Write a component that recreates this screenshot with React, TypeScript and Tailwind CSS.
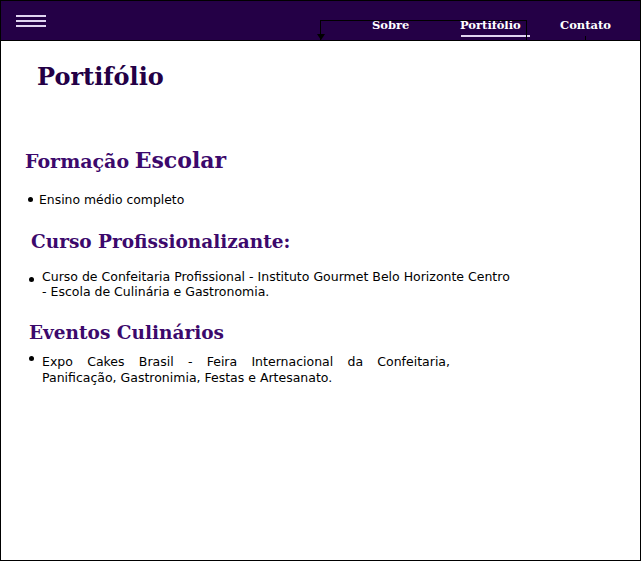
const serif = { fontFamily: '"DejaVu Serif", "Liberation Serif", serif' };
const sans = { fontFamily: '"DejaVu Sans", Verdana, sans-serif' };

function Bullet({ className }: { className: string }) {
  return <span className={`absolute left-0 h-[5px] w-[5px] rounded-full bg-black ${className}`} />;
}

export default function App() {
  return (
    <div className="relative h-[561px] w-[641px] overflow-hidden border border-black bg-white text-black">
      <header className="relative flex h-[40px] items-center border-b border-black bg-[#240046] pl-[15px]">
        <button type="button" className="flex w-[30px] flex-col gap-[3px]" aria-label="Menu">
          <span className="h-[2px] w-full bg-[#e0d4f0]" />
          <span className="h-[2px] w-full bg-[#e0d4f0]" />
          <span className="h-[2px] w-full bg-[#e0d4f0]" />
        </button>
        <nav className="ml-[326px] flex items-center pt-[10px] text-[11.5px] font-bold text-white" style={serif}>
          <a className="w-[88px]">Sobre</a>
          <a className="relative w-[100px]">
            Portifólio
            <span className="absolute left-[1px] top-[18px] h-[2px] w-[69px] bg-[#e0d4f0]" />
          </a>
          <a>Contato</a>
        </nav>
        {/* stray borders over the nav */}
        <div className="pointer-events-none absolute left-[319px] top-[19px] h-[21px] w-[207px] border-l border-r border-t border-black" />
        <div className="pointer-events-none absolute left-[316px] top-[33px] h-0 w-0 border-l-[4px] border-r-[4px] border-t-[6px] border-l-transparent border-r-transparent border-t-black" />
        <div className="pointer-events-none absolute left-[584px] top-[35px] h-[5px] w-px bg-black" />
      </header>

      <main className="px-[24px]">
        <h1 className="ml-[12px] mt-[22px] text-[24px] font-bold leading-[1.2] text-[#240046]" style={serif}>
          Portifólio
        </h1>

        <h2 className="mt-[55px] font-bold leading-[1.2] text-[#3c096c]" style={serif}>
          <span className="text-[19px]">Formação</span> <span className="text-[22px]">Escolar</span>
        </h2>
        <ul className="mt-[19px] text-[12.4px] leading-[15px]" style={sans}>
          <li className="relative pl-[14px]">
            <Bullet className="top-[5px] ml-[3px]" />
            Ensino médio completo
          </li>
        </ul>

        <h2 className="ml-[6px] mt-[24px] text-[18.5px] font-bold leading-[1.2] text-[#3c096c]" style={serif}>
          Curso Profissionalizante:
        </h2>
        <ul className="mt-[16px] text-[12.5px] leading-[15px]" style={sans}>
          <li className="relative w-[487px] pl-[17px]">
            <Bullet className="top-[8px] ml-[4px]" />
            Curso de Confeitaria Profissional - Instituto Gourmet Belo Horizonte Centro - Escola de Culinária e Gastronomia.
          </li>
        </ul>

        <h2 className="ml-[4px] mt-[23px] text-[18.5px] font-bold leading-[1.2] text-[#3c096c]" style={serif}>
          Eventos Culinários
        </h2>
        <ul className="mt-[9px] text-justify text-[12.5px] leading-[16px]" style={sans}>
          <li className="relative w-[425px] pl-[17px]">
            <Bullet className="top-[2px] ml-[4px]" />
            Expo Cakes Brasil - Feira Internacional da Confeitaria, Panificação, Gastronimia, Festas e Artesanato.
          </li>
        </ul>
      </main>
    </div>
  );
}
